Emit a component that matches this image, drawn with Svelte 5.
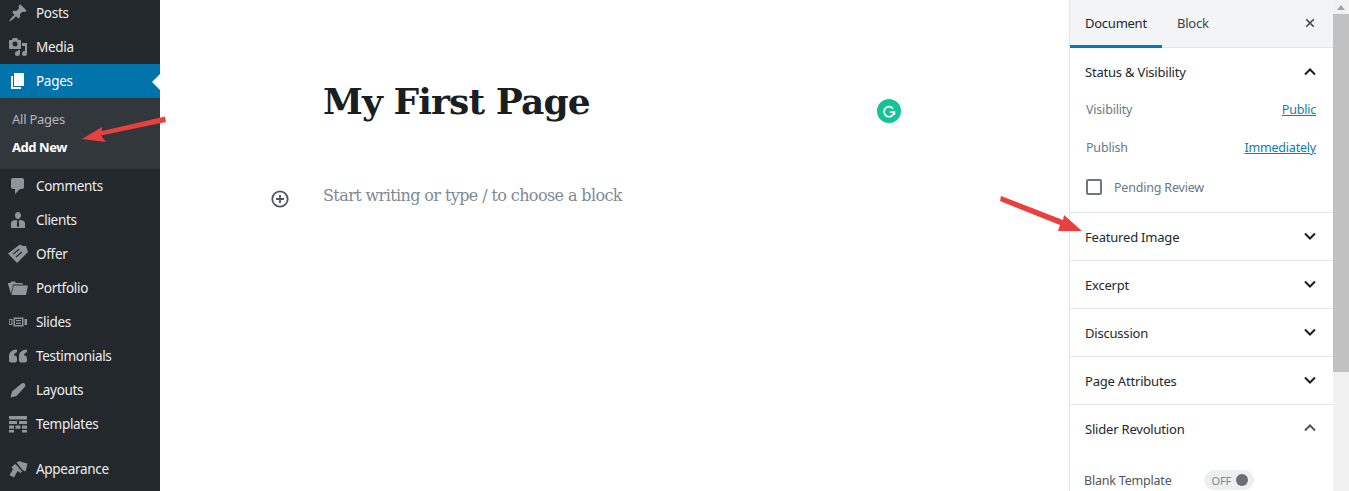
<script>
  const menuTop = [
    { label: 'Posts', icon: 'M10.4 3l1.800-1.800 6.400 6.300-1.800 1.800c-1-.7-2.500-.6-3.400.4l-.8.7c-.9.9-1 2.400-.3 3.400l-1.900 1.800-2.400-2.400-2.800 2.800c-.4.4-3.400 2.700-3.800 2.300s1.900-3.400 2.300-3.800l2.800-2.800L4.100 9.400l1.800-1.900c1.100.7 2.500.6 3.400-.3l.8-.8c.9-.9 1-2.300.3-3.400z' },
    { label: 'Media', icon: 'M13 11V4c0-.6-.4-1-1-1h-1.700L9 1H5L3.700 3H2c-.6 0-1 .4-1 1v7c0 .6.4 1 1 1h10c.6 0 1-.4 1-1zM7 4.500a2.500 2.500 0 1 1 0 5 2.500 2.500 0 0 1 0-5zM14 6h5v10.500a2.500 2.500 0 1 1-2-2.450V9h-3V6zm-4 8.050V13h2v3.500a2.500 2.500 0 1 1-2-2.450z' }
  ];
  const menuBottom = [
    { label: 'Comments', icon: 'M5 2h9c1.100 0 2 .9 2 2v7c0 1.100-.9 2-2 2h-2l-5 5v-5H5c-1.100 0-2-.9-2-2V4c0-1.100.9-2 2-2z' },
    { label: 'Clients', icon: 'M10 2c1.800 0 3 1.300 3 3.200S11.800 9 10 9 7 7.100 7 5.200 8.200 2 10 2zM7.500 10l1.800.6-.5 5 1.200 1.900 1.200-1.900-.5-5 1.800-.6c3 .3 4.500 1.400 4.500 3.500V18H3v-4.500c0-2.100 1.500-3.200 4.500-3.500z' },
    { label: 'Offer', icon: 'M0 9.500L12 .5l3 1.500 3 0 2 6-11 11zM5 9.500l6-5 .8 1-6 5zM7.500 12.500l6-5 .8 1-6 5z' },
    { label: 'Portfolio', icon: 'M0 5l2.500-.1.500-1.400h4l1 1.400h6.500l.5 1.600H5L3 16 0 6zM5.500 7.500H20L18 17H3.500z' },
    { label: 'Slides', icon: 'M5.500 5.500h10v9h-10zM7 7v6h7V7zM8 8h5v1.300H8zm0 2.700h5V12H8zM1 7h3.500v6H1zm.8.900v4.200h1.600V7.900zM16.500 7H19v6h-2.500z' },
    { label: 'Testimonials', icon: 'M9 3.500v2.800c-2.100.6-3 1.700-3 3.200.9 0 3 .2 3 3v2c0 1.200-1 2-2 2H3c-1.200 0-2-.8-2-2V10c0-3.700 3-6.200 8-6.500zM19 3.500v2.800c-2.100.6-3 1.700-3 3.200.9 0 3 .2 3 3v2c0 1.200-1 2-2 2h-4c-1.200 0-2-.8-2-2V10c0-3.700 3-6.200 8-6.500z' },
    { label: 'Layouts', icon: 'M2.500 17.500l1.500-6L13.500 3.500c1-.8 2.500-.8 3.300.2.800 1 .7 2.300-.1 3.200L8.500 16z' },
    { label: 'Templates', icon: 'M1 2h18v3.500H1zM1 7h8v3H1zm10 0h8v3h-8zM1 11.500h5v3.200H1zm6.500 0h5v3.200h-5zm6.500 0h5v3.200h-5zM1 16h5v2.500H1zm13 0h5v2.500h-5z' }
  ];
  const closedPanels = ['Featured Image', 'Excerpt', 'Discussion', 'Page Attributes'];
</script>

<div class="page">
  <nav class="sidebar">
    {#each menuTop as item}
      <div class="item">
        <svg class="icon" viewBox="0 0 20 20"><path fill-rule="evenodd" d={item.icon} /></svg>
        <span>{item.label}</span>
      </div>
    {/each}
    <div class="item current">
      <svg class="icon" viewBox="0 0 20 20"><path d="M6 15V2h10v13H6zm-1 1h8v2H3V5h2v11z" /></svg>
      <span>Pages</span>
    </div>
    <div class="submenu">
      <div>All Pages</div>
      <div class="active">Add New</div>
    </div>
    {#each menuBottom as item}
      <div class="item">
        <svg class="icon" viewBox="0 0 20 20"><path fill-rule="evenodd" d={item.icon} /></svg>
        <span>{item.label}</span>
      </div>
    {/each}
    <div class="item appearance">
      <svg class="icon" viewBox="0 0 20 20"><path d="M8.500 3.500c2-1.500 4-1.500 6-.3l5 1.300-1.500 6.500-1 1.500-2.500-1.500zM7.500 5l6.500 7.500-1.500 1.500-3-2-3.500 6.500-4.500-2.500L5 10.500 3.500 8z" /></svg>
      <span>Appearance</span>
    </div>
  </nav>

  <main class="editor">
    <h1>My First Page</h1>
    <div class="block">
      <svg class="inserter" viewBox="0 0 20 20"><circle cx="10" cy="10" r="7.700" /><path d="M10 6v8M6 10h8" /></svg>
      <p>Start writing or type / to choose a block</p>
    </div>
    <div class="grammarly">
      <svg viewBox="0 0 24 24"><path d="M16.800 9.200A6 6 0 1 0 18 13.500h-5" /><path d="M18.500 16.500v-3.300h-3.300" /></svg>
    </div>
  </main>

  <aside class="settings">
    <div class="tabs">
      <div class="tab selected">Document</div>
      <div class="tab">Block</div>
      <svg class="close" viewBox="0 0 12 12"><path d="M1.500 1.500l9 9M10.500 1.500l-9 9" /></svg>
    </div>

    <section class="panel status">
      <div class="panel-head">
        <span>Status &amp; Visibility</span>
        <svg class="chevron" viewBox="0 0 12 8"><path d="M1 6.500l5-5 5 5" /></svg>
      </div>
      <div class="row"><span>Visibility</span><a href="#public">Public</a></div>
      <div class="row"><span>Publish</span><a href="#publish">Immediately</a></div>
      <label class="check"><i></i><span>Pending Review</span></label>
    </section>

    {#each closedPanels as title}
      <section class="panel">
        <div class="panel-head">
          <span>{title}</span>
          <svg class="chevron" viewBox="0 0 12 8"><path d="M1 1.500l5 5 5-5" /></svg>
        </div>
      </section>
    {/each}

    <section class="panel last">
      <div class="panel-head">
        <span>Slider Revolution</span>
        <svg class="chevron thin" viewBox="0 0 12 8"><path d="M1 6.500l5-5 5 5" /></svg>
      </div>
      <div class="template">
        <span>Blank Template</span>
        <div class="toggle"><em>OFF</em><b></b></div>
      </div>
    </section>
  </aside>

  <div class="scrollbar">
    <svg viewBox="0 0 8 5"><path d="M4 0l4 5H0z" /></svg>
    <div class="thumb"></div>
  </div>

  <svg class="annotations" viewBox="0 0 1349 491">
    <path d="M165 116.500L102 131l0-4-20 12 24 3-5-6.500 65-13.500z" />
    <path d="M1001 196l62 24 1-5 18 16-24 0 2-6-60-24z" />
  </svg>
</div>

<style>
  :global(body) {
    margin: 0;
    background: #fff;
  }

  .page {
    position: relative;
    display: flex;
    height: 491px;
    overflow: hidden;
    font-family: "Noto Sans", "Open Sans", sans-serif;
    color: #23282d;
  }

  .sidebar {
    flex: 0 0 160px;
    box-sizing: border-box;
    margin-top: -4px;
    background: #23282d;
    color: #eee;
    font-size: 13.500px;
  }

  .item {
    display: flex;
    align-items: center;
    height: 34px;
    padding-left: 8px;
    gap: 8px;
  }

  .item span {
    letter-spacing: -0.3px;
  }

  .icon {
    width: 20px;
    height: 20px;
    fill: #90959a;
    flex: none;
  }

  .current {
    position: relative;
    background: #0073aa;
    color: #fff;
  }

  .current .icon {
    fill: #fff;
  }

  .current::after {
    content: "";
    position: absolute;
    right: 0;
    top: 10px;
    border: 8px solid transparent;
    border-right-color: #fff;
    border-left-width: 0;
  }

  .submenu {
    box-sizing: border-box;
    height: 71px;
    padding: 7px 0 0 12px;
    background: #32373c;
    color: #b4b9be;
    font-size: 13px;
    line-height: 28px;
    letter-spacing: -0.25px;
  }

  .submenu .active {
    color: #fff;
    font-weight: 700;
    letter-spacing: -0.45px;
  }

  .appearance {
    margin-top: 11px;
  }

  .editor {
    position: relative;
    flex: 1;
    padding-left: 163px;
    min-width: 0;
  }

  h1 {
    margin: 72px 0 0;
    font: 700 36px/58px "DejaVu Serif", "Liberation Serif", serif;
    letter-spacing: -0.9px;
    color: #191e23;
    white-space: nowrap;
  }

  .block {
    position: relative;
    margin-top: 52px;
  }

  .block p {
    margin: 0;
    font: 16px/28px "DejaVu Serif", "Liberation Serif", serif;
    letter-spacing: -0.6px;
    color: #7e8993;
    white-space: nowrap;
  }

  .inserter {
    position: absolute;
    left: -53px;
    top: 7px;
    width: 20px;
    height: 20px;
    fill: none;
    stroke: #50565c;
    stroke-width: 1.800;
  }

  .grammarly {
    position: absolute;
    left: 717px;
    top: 99px;
    display: flex;
    align-items: center;
    justify-content: center;
    width: 24px;
    height: 24px;
    border-radius: 50%;
    background: #15c39a;
  }

  .grammarly svg {
    width: 20px;
    height: 20px;
    fill: none;
    stroke: #fff;
    stroke-width: 2;
  }

  .settings {
    flex: 0 0 264px;
    box-sizing: border-box;
    border-left: 1px solid #e2e4e7;
    font-size: 13px;
    letter-spacing: -0.2px;
  }

  .tabs {
    display: flex;
    align-items: flex-start;
    height: 47px;
    padding-right: 18px;
    background: #f3f4f5;
    border-bottom: 1px solid #e2e4e7;
  }

  .tab {
    padding: 0 15px;
    height: 45px;
    line-height: 46px;
    color: #3c4248;
    letter-spacing: -0.25px;
  }

  .tab.selected {
    width: 62px;
    border-bottom: 3px solid #007cba;
    color: #23282d;
  }

  .close {
    width: 10px;
    height: 10px;
    margin: 18px 0 0 auto;
    fill: none;
    stroke: #40464c;
    stroke-width: 2;
  }

  .panel {
    border-bottom: 1px solid #e2e4e7;
  }

  .panel-head {
    display: flex;
    align-items: center;
    justify-content: space-between;
    height: 47px;
    padding: 0 17px 0 15px;
    color: #23282d;
  }

  .chevron {
    width: 12px;
    height: 8px;
    margin-top: -1px;
    fill: none;
    stroke: #191e23;
    stroke-width: 2;
  }

  .status .chevron {
    margin-top: 1px;
  }

  .chevron.thin {
    stroke: #50565c;
    margin-top: -2px;
  }

  .status {
    height: 164px;
  }

  .row {
    display: flex;
    justify-content: space-between;
    height: 38px;
    line-height: 29px;
    padding: 0 17px 0 16px;
    font-size: 12.500px;
    color: #6c7781;
  }

  .row a {
    color: #0f7ea8;
    text-decoration: underline;
  }

  .check {
    display: flex;
    align-items: center;
    gap: 12px;
    height: 24px;
    margin-top: 4px;
    padding-left: 16px;
    font-size: 12.500px;
    color: #6c7781;
  }

  .check i {
    box-sizing: border-box;
    width: 16px;
    height: 16px;
    border: 2px solid #6c7781;
    border-radius: 2px;
  }

  .last {
    border-bottom: 0;
  }

  .template {
    display: flex;
    align-items: center;
    gap: 32px;
    margin-top: 18px;
    padding-left: 14px;
    font-size: 12.500px;
    color: #50565c;
  }

  .toggle {
    display: flex;
    align-items: center;
    justify-content: space-between;
    box-sizing: border-box;
    width: 50px;
    height: 20px;
    padding: 0 6px 0 8px;
    border-radius: 10px;
    background: #eceef0;
  }

  .toggle em {
    font-style: normal;
    font-size: 11px;
    color: #7e8993;
  }

  .toggle b {
    width: 12px;
    height: 12px;
    border-radius: 50%;
    background: #6c7074;
  }

  .scrollbar {
    flex: 0 0 16px;
    background: #f1f1f1;
    text-align: center;
  }

  .scrollbar svg {
    display: block;
    width: 8px;
    height: 5px;
    margin: 5px auto 4px;
    fill: #a3a3a3;
  }

  .thumb {
    height: 358px;
    margin-top: 1px;
    background: #c1c1c1;
  }

  .annotations {
    position: absolute;
    inset: 0;
    width: 1349px;
    height: 491px;
    fill: #e8403f;
    pointer-events: none;
  }
</style>
